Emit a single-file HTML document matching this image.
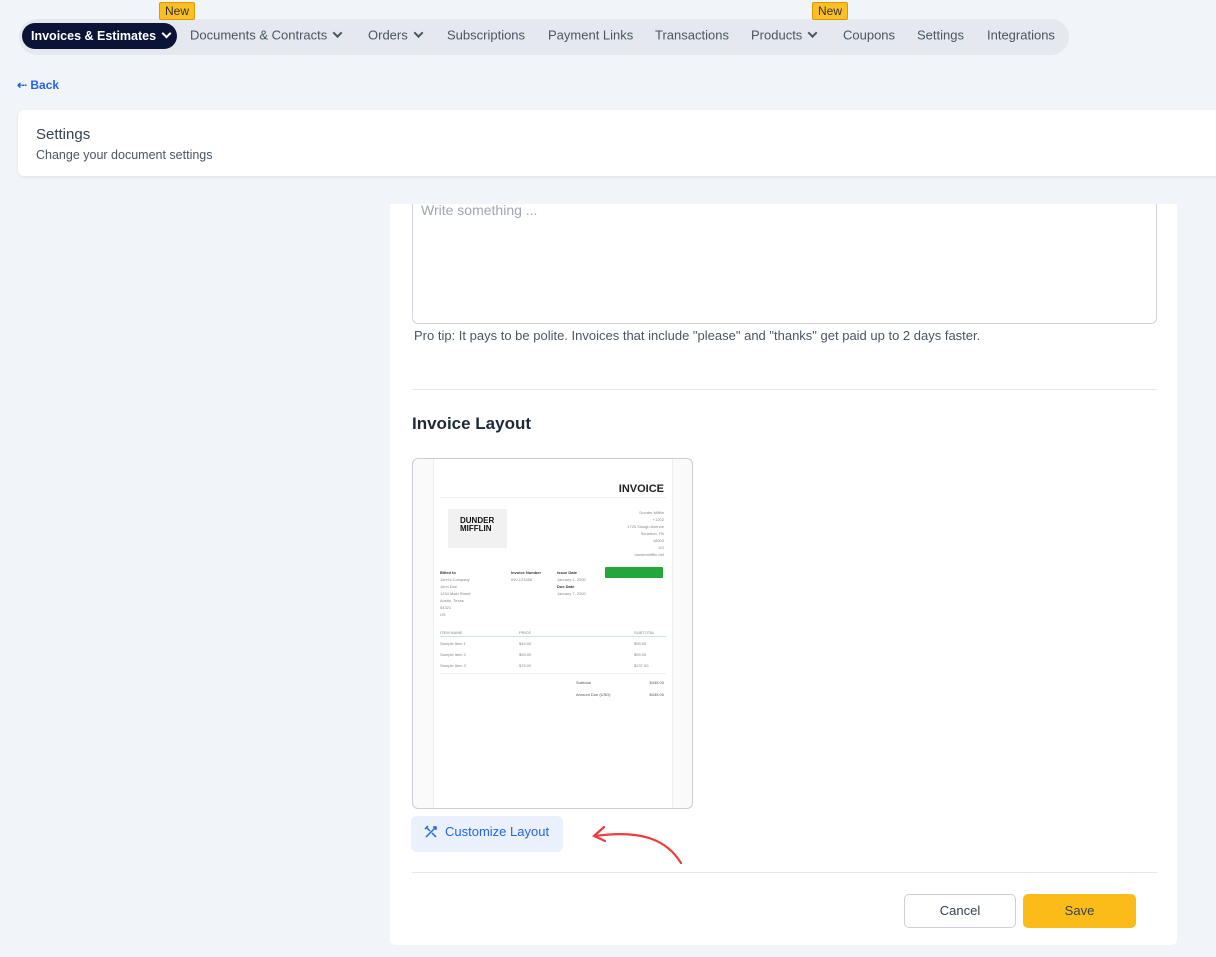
<!DOCTYPE html>
<html><head><style>
*{box-sizing:border-box;margin:0;padding:0}
body{width:1216px;height:957px;background:#f1f5f9;font-family:"Liberation Sans",sans-serif;position:relative;overflow:hidden;color:#1f2937}
.nav{position:absolute;left:19px;top:19px;width:1050px;height:36px;background:#e5e9ef;border-radius:18px}
.ni{position:absolute;top:35px;transform:translateY(-50%);font-size:13px;color:#4b5563;white-space:nowrap}
.act{position:absolute;left:22px;top:23px;width:155px;height:26px;background:#0b1437;border-radius:13px;color:#fff;font-size:12.5px;font-weight:bold;line-height:26px;padding-left:9px;white-space:nowrap}
.new{position:absolute;top:2px;height:18px;width:36px;background:#fbbf24;border:1px solid #d89b00;font-size:12px;color:#333;text-align:center;line-height:16px;border-radius:2px}
.chev{display:inline-block;width:7px;height:7px;border-right:2px solid currentColor;border-bottom:2px solid currentColor;transform:rotate(45deg);margin-left:7px;position:relative;top:-3px}
.card{position:absolute;background:#fff;border-radius:6px}
</style></head><body>
<div class="nav"></div>
<div class="act">Invoices &amp; Estimates<span class="chev"></span></div>
<div class="new" style="left:159px">New</div>
<div class="new" style="left:812px">New</div>
<div class="ni" style="left:190px">Documents &amp; Contracts<span class="chev"></span></div>
<div class="ni" style="left:368px">Orders<span class="chev"></span></div>
<div class="ni" style="left:447px">Subscriptions</div>
<div class="ni" style="left:548px">Payment Links</div>
<div class="ni" style="left:655px">Transactions</div>
<div class="ni" style="left:751px">Products<span class="chev"></span></div>
<div class="ni" style="left:843px">Coupons</div>
<div class="ni" style="left:917px">Settings</div>
<div class="ni" style="left:987px">Integrations</div>
<div style="position:absolute;left:17px;top:78px;font-size:12px;color:#2563eb;font-weight:bold">⇠ Back</div>

<div class="card" style="left:390px;top:204px;width:787px;height:741px;border-radius:0 0 6px 6px"></div>
<div class="card" style="left:18px;top:110px;width:1210px;height:66px;box-shadow:0 1px 3px rgba(0,0,0,.08)">
<div style="position:absolute;left:18px;top:16px;font-size:15px;color:#374151">Settings</div>
<div style="position:absolute;left:18px;top:38px;font-size:12.5px;color:#4b5563">Change your document settings</div>
</div>
<div style="position:absolute;left:412px;top:204px;width:745px;height:120px;border:1px solid #d1d5db;border-top:none;border-radius:0 0 6px 6px"></div>
<div style="position:absolute;left:421px;top:202px;font-size:14px;color:#a0a7b1">Write something ...</div>
<div style="position:absolute;left:414px;top:328px;font-size:13px;color:#4b5563">Pro tip: It pays to be polite. Invoices that include "please" and "thanks" get paid up to 2 days faster.</div>
<div style="position:absolute;left:412px;top:389px;width:745px;height:1px;background:#e5e7eb"></div>
<div style="position:absolute;left:412px;top:414px;font-size:17px;font-weight:bold;color:#1f2937">Invoice Layout</div>

<div style="position:absolute;left:412px;top:458px;width:281px;height:351px;border:1px solid #c9cdd6;border-radius:6px;overflow:hidden;background:#fafafa">
<div style="position:absolute;left:20px;top:0;width:240px;height:351px;background:#fff;border-left:1px solid #eee;border-right:1px solid #eee;font-size:4px;color:#888">
<div style="position:absolute;right:8px;top:24px;font-size:11px;font-weight:bold;color:#222">INVOICE</div>
<div style="position:absolute;left:6px;right:6px;top:38px;height:1px;background:#eee"></div>
<div style="position:absolute;left:14px;top:50px;width:59px;height:39px;background:#f1f1f1"><div style="margin:8px 0 0 12px;font-size:8px;font-weight:bold;line-height:8px;color:#111">DUNDER<br>MIFFLIN</div></div>
<div style="position:absolute;right:8px;top:50px;text-align:right;line-height:7px">Dunder Mifflin<br>+1202<br>1725 Slough Avenue<br>Scranton, PA<br>18503<br>US<br>dundermifflin.net</div>
<div style="position:absolute;left:6px;top:110px;line-height:7px"><b style="color:#333">Billed to</b><br>John's Company<br>John Doe<br>1234 Main Street<br>Austin, Texas<br>54321<br>US</div>
<div style="position:absolute;left:77px;top:110px;line-height:7px"><b style="color:#333">Invoice Number</b><br>INV-123456</div>
<div style="position:absolute;left:123px;top:110px;line-height:7px"><b style="color:#333">Issue Date</b><br>January 1, 2000<br><b style="color:#333">Due Date</b><br>January 7, 2000</div>
<div style="position:absolute;left:171px;top:108px;width:58px;height:11px;background:#22a83a;border-radius:1px"></div>
<div style="position:absolute;left:6px;right:6px;top:168px;line-height:11px">ITEM NAME<br>Sample Item 1<br>Sample Item 2<br>Sample Item 3</div>
<div style="position:absolute;left:6px;right:6px;top:177px;height:1px;background:#cfe0f0"></div>
<div style="position:absolute;left:85px;top:168px;line-height:11px">PRICE<br>$49.00<br>$99.00<br>$79.00</div>
<div style="position:absolute;left:200px;top:168px;line-height:11px">SUBTOTAL<br>$99.00<br>$99.00<br>$237.00</div>
<div style="position:absolute;left:6px;right:6px;top:214px;height:1px;background:#eee"></div>
<div style="position:absolute;left:142px;top:218px;width:90px;line-height:12px;color:#555">Subtotal<br>Amount Due (USD)</div>
<div style="position:absolute;right:8px;top:218px;line-height:12px;text-align:right;color:#555">$435.00<br>$435.00</div>
</div></div>

<div style="position:absolute;left:411px;top:816px;width:152px;height:36px;background:#eaf1fd;border-radius:6px;color:#2563eb;font-size:13px;line-height:32px;padding-left:34px">Customize Layout</div>
<svg style="position:absolute;left:423px;top:824px" width="16" height="16" viewBox="0 0 16 16" fill="none" stroke="#2563eb" stroke-width="1.5"><path d="M3 13L13 3M10 3h3v3M3 3l4 4M9 9l4 4M2 5l3-3"/></svg>
<svg style="position:absolute;left:590px;top:822px" width="95" height="45" viewBox="0 0 95 45" fill="none" stroke="#ef3b3b" stroke-width="2.2" stroke-linecap="round"><path d="M91 41C78 20 55 7 5 14M14 5L4 14L15 19"/></svg>
<div style="position:absolute;left:412px;top:872px;width:745px;height:1px;background:#e5e7eb"></div>
<div style="position:absolute;left:904px;top:894px;width:112px;height:34px;border:1px solid #cbd0d8;border-radius:5px;font-size:13px;line-height:32px;text-align:center;color:#374151">Cancel</div>
<div style="position:absolute;left:1023px;top:894px;width:113px;height:34px;background:#fbbc1a;border-radius:5px;font-size:13px;line-height:34px;text-align:center;color:#374151">Save</div>
</body></html>
